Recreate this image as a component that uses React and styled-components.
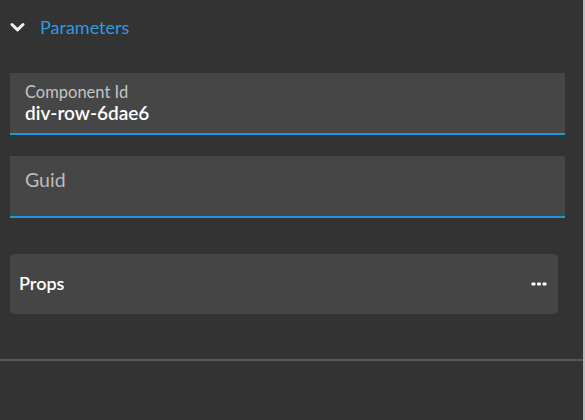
import React from 'react'
import styled, { createGlobalStyle } from 'styled-components'

const GlobalStyle = createGlobalStyle`
  html, body {
    margin: 0;
    padding: 0;
    background: #333333;
  }
  body {
    font-family: Lato, "Open Sans", sans-serif;
  }
`

const Panel = styled.div`
  width: 585px;
  height: 420px;
  box-sizing: border-box;
  background: #333333;
  border-right: 2px solid #bdbdbd;
  display: flex;
  flex-direction: column;
`

const Header = styled.div`
  height: 54px;
  display: flex;
  align-items: center;
  gap: 15px;
  padding-left: 10px;
`

const Title = styled.span`
  color: #2e9ae0;
  font-size: 18px;
  font-weight: 400;
`

const Fields = styled.div`
  display: flex;
  flex-direction: column;
  gap: 21px;
  padding: 19px 18px 0 10px;
`

const Field = styled.div`
  height: 62px;
  box-sizing: border-box;
  background: #464646;
  border-bottom: 2px solid #2196e0;
  padding: ${props => (props.filled ? '10px 15px 0' : '12px 15px 0')};
  display: flex;
  flex-direction: column;
`

const Label = styled.span`
  color: ${props => (props.small ? '#c4c4c4' : '#bdbdbd')};
  font-size: ${props => (props.small ? '16.5px' : '19.5px')};
  line-height: ${props => (props.small ? '18px' : '24px')};
`

const Value = styled.span`
  color: #ffffff;
  font-size: 19px;
  line-height: 24px;
  font-weight: 600;
`

const PropsCard = styled.div`
  margin: 36px 25px 0 10px;
  height: 60px;
  border-radius: 4px;
  background: #454545;
  display: flex;
  align-items: center;
  justify-content: space-between;
  padding: 0 11px 0 9px;
  box-sizing: border-box;
`

const CardTitle = styled.span`
  color: #ffffff;
  font-size: 18px;
  font-weight: 600;
  margin-top: -2px;
`

const Divider = styled.div`
  margin-top: 45px;
  height: 2px;
  background: #575757;
`

const Chevron = () => (
  <svg width="15" height="10" viewBox="0 0 15 10">
    <path d="M2 2.5 L7.5 7.8 L13 2.5" fill="none" stroke="#f2f2f2" strokeWidth="3" strokeLinecap="round" strokeLinejoin="round" />
  </svg>
)

const Dots = () => (
  <svg width="16" height="4" viewBox="0 0 16 4">
    <rect x="0.5" y="0.5" width="4" height="3" rx="1" fill="#ffffff" />
    <rect x="6" y="0.5" width="4" height="3" rx="1" fill="#ffffff" />
    <rect x="11.5" y="0.5" width="4" height="3" rx="1" fill="#ffffff" />
  </svg>
)

const App = () => {
  return (
    <Panel>
      <GlobalStyle />
      <Header>
        <Chevron />
        <Title>Parameters</Title>
      </Header>
      <Fields>
        <Field filled>
          <Label small>Component Id</Label>
          <Value>div-row-6dae6</Value>
        </Field>
        <Field>
          <Label>Guid</Label>
        </Field>
      </Fields>
      <PropsCard>
        <CardTitle>Props</CardTitle>
        <Dots />
      </PropsCard>
      <Divider />
    </Panel>
  )
}

export default App
